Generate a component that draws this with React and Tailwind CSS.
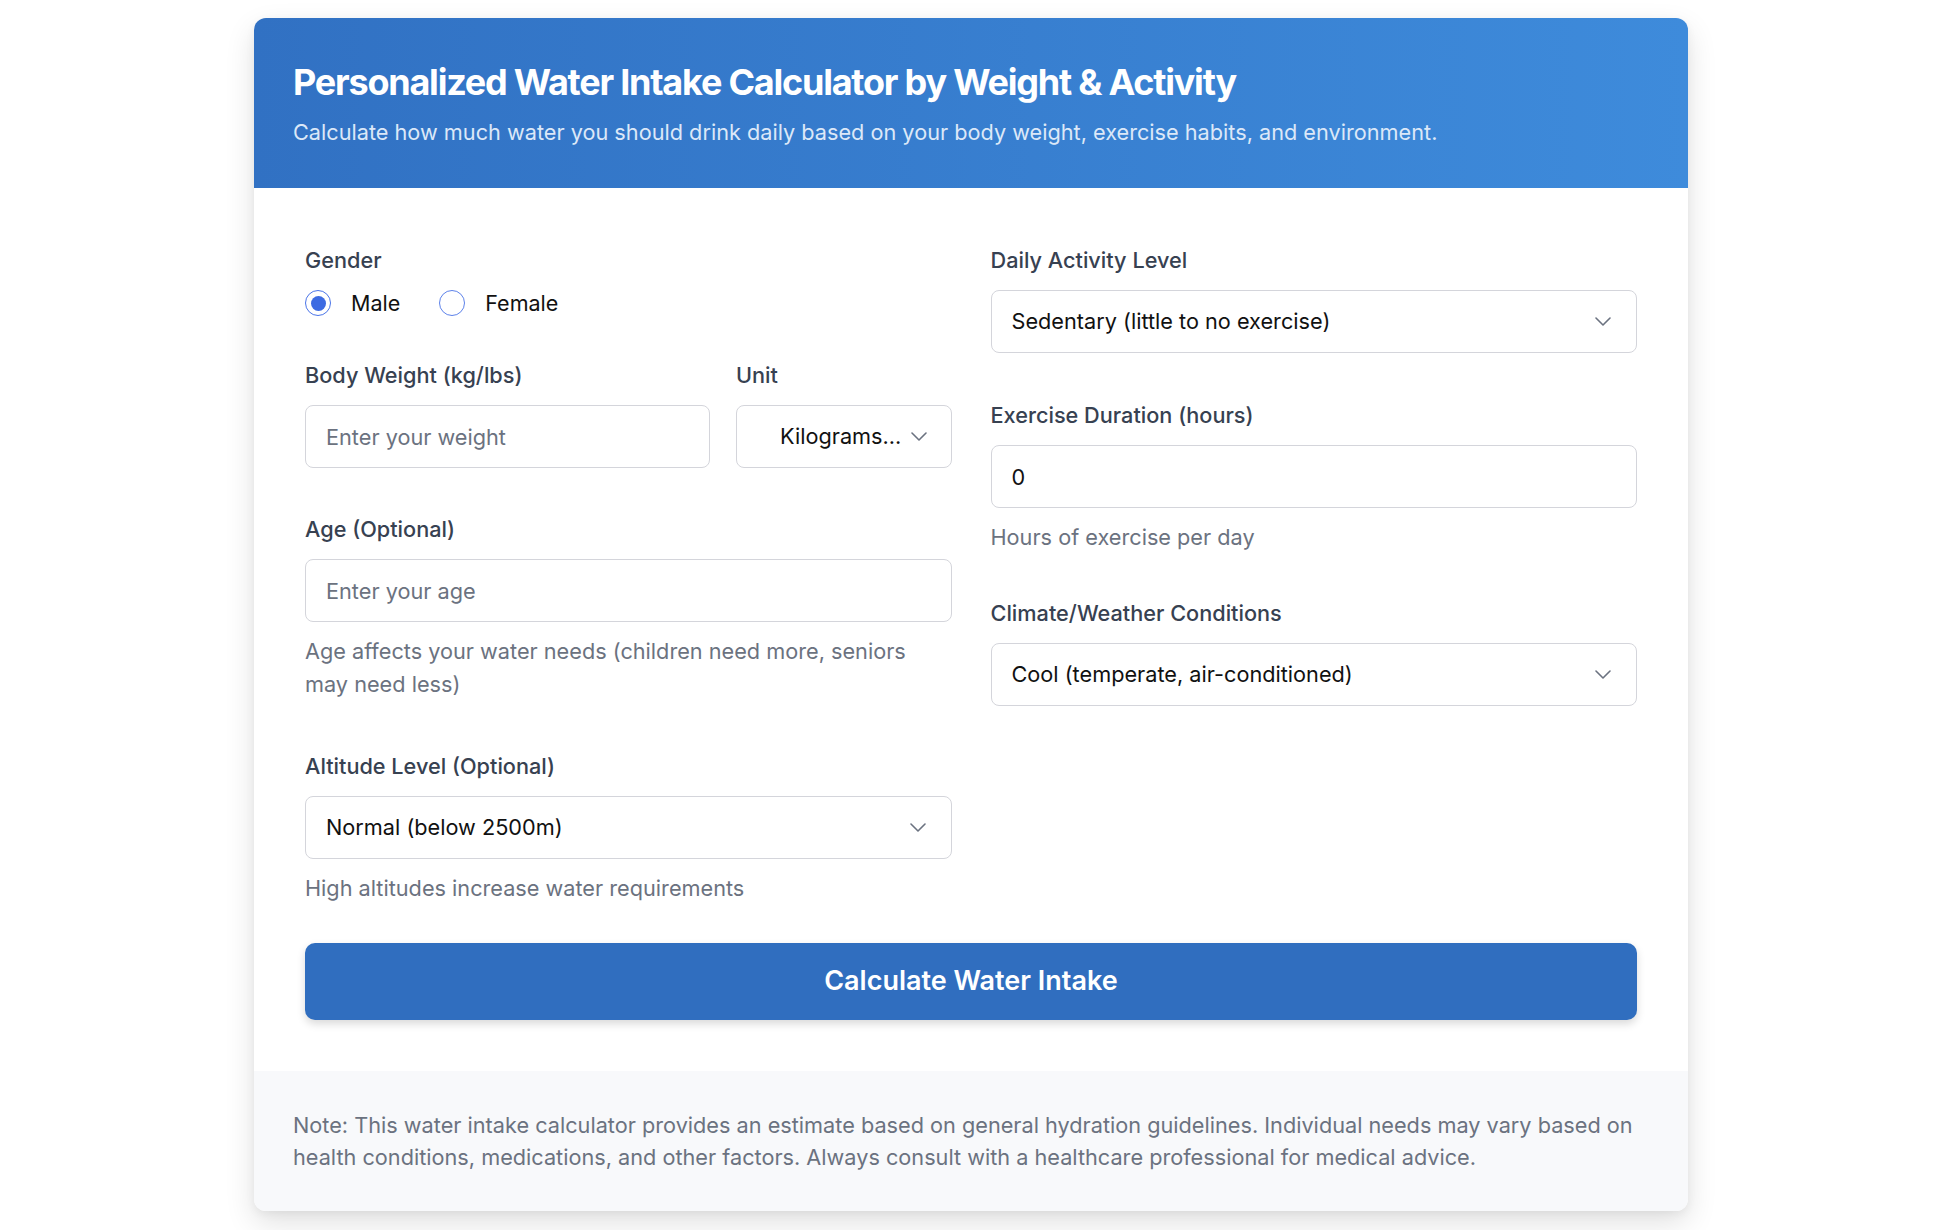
import React from "react";

function Chevron() {
  return (
    <svg width="16" height="9" viewBox="0 0 16 9" fill="none" className="shrink-0">
      <polyline points="1,1 8,8 15,1" stroke="#6b7280" strokeWidth="1.6" strokeLinecap="round" strokeLinejoin="round" />
    </svg>
  );
}

function Label({ children }) {
  return (
    <div className="text-[21.7px] leading-[30px] font-medium text-[#374151]">{children}</div>
  );
}

function SelectBox({ text }) {
  return (
    <div className="mt-[15px] h-[63px] rounded-lg border border-[#d4d5db] bg-white flex items-center justify-between pl-[20px] pr-[25px]">
      <span className="text-[21.7px] text-[#111111]">{text}</span>
      <Chevron />
    </div>
  );
}

function Help({ children }) {
  return (
    <p className="mt-[13px] text-[21.7px] leading-[32.5px] text-[#6b7280]">{children}</p>
  );
}

function Radio({ checked, label }) {
  return (
    <div className="flex items-center gap-[20px]">
      <span
        className={
          "w-[26px] h-[26px] rounded-full border-[1.5px] flex items-center justify-center " +
          (checked ? "border-[#4a74e8]" : "border-[#5d82ea]")
        }
      >
        {checked && <span className="w-[15px] h-[15px] rounded-full bg-[#3d6be2]" />}
      </span>
      <span className="text-[21.5px] leading-[30px] text-[#111111]">{label}</span>
    </div>
  );
}

export default function App() {
  return (
    <div className="min-h-screen bg-white pt-[18px] pb-[19px] font-['Inter','Noto_Sans',sans-serif]">
      <div className="ml-[254px] w-[1434px] rounded-xl bg-white shadow-[0_12px_30px_rgba(0,0,0,0.12),0_3px_10px_rgba(0,0,0,0.05)] overflow-hidden">
        {/* Header */}
        <div className="bg-linear-to-r from-[#3171c3] to-[#3e8bdb] px-[39px] pt-[42px] pb-[38px]">
          <h1 className="text-[36px] leading-[45px] font-bold text-white tracking-[-0.034em]">
            Personalized Water Intake Calculator by Weight &amp; Activity
          </h1>
          <p className="mt-[10px] text-[21.7px] leading-[35px] text-[#dce8f8]">
            Calculate how much water you should drink daily based on your body weight, exercise habits, and environment.
          </p>
        </div>

        {/* Body */}
        <div className="px-[51px] pt-[57px] pb-[51px]">
          <div className="grid grid-cols-2 gap-x-[39px]">
            {/* Left column */}
            <div className="flex flex-col">
              <div>
                <Label>Gender</Label>
                <div className="mt-[15px] h-[26px] flex items-center gap-[39px]">
                  <Radio checked label="Male" />
                  <Radio label="Female" />
                </div>
              </div>

              <div className="mt-[44px]">
                <div className="flex gap-[26px]">
                  <div className="w-[405px]">
                    <Label>Body Weight (kg/lbs)</Label>
                  </div>
                  <div className="flex-1">
                    <Label>Unit</Label>
                  </div>
                </div>
                <div className="mt-[15px] flex gap-[26px]">
                  <input
                    type="text"
                    placeholder="Enter your weight"
                    className="w-[405px] h-[63px] rounded-lg border border-[#d4d5db] bg-white px-[20px] text-[21.7px] text-[#111111] placeholder:text-[#6b7280] outline-none"
                  />
                  <div className="flex-1 h-[63px] rounded-lg border border-[#d4d5db] bg-white flex items-center pl-[43px] pr-[24px] justify-between">
                    <span className="text-[21.7px] text-[#111111]">Kilograms...</span>
                    <Chevron />
                  </div>
                </div>
              </div>

              <div className="mt-[46px]">
                <Label>Age (Optional)</Label>
                <input
                  type="text"
                  placeholder="Enter your age"
                  className="mt-[15px] w-full h-[63px] rounded-lg border border-[#d4d5db] bg-white px-[20px] text-[21.7px] text-[#111111] placeholder:text-[#6b7280] outline-none"
                />
                <Help>
                  Age affects your water needs (children need more, seniors
                  <br />
                  may need less)
                </Help>
              </div>

              <div className="mt-[51px]">
                <Label>Altitude Level (Optional)</Label>
                <SelectBox text="Normal (below 2500m)" />
                <Help>High altitudes increase water requirements</Help>
              </div>
            </div>

            {/* Right column */}
            <div className="flex flex-col">
              <div>
                <Label>Daily Activity Level</Label>
                <SelectBox text="Sedentary (little to no exercise)" />
              </div>

              <div className="mt-[47px]">
                <Label>Exercise Duration (hours)</Label>
                <input
                  type="text"
                  defaultValue="0"
                  className="mt-[15px] w-full h-[63px] rounded-lg border border-[#d4d5db] bg-white px-[20px] text-[21.7px] text-[#111111] outline-none"
                />
                <Help>Hours of exercise per day</Help>
              </div>

              <div className="mt-[44px]">
                <Label>Climate/Weather Conditions</Label>
                <SelectBox text="Cool (temperate, air-conditioned)" />
              </div>
            </div>
          </div>

          <button className="mt-[38px] w-full h-[77px] rounded-[10px] bg-[#306ebf] text-white text-[27px] font-semibold shadow-[0_4px_8px_rgba(0,0,0,0.15)]">
            Calculate Water Intake
          </button>
        </div>

        {/* Footer */}
        <div className="bg-[#f8f9fb] px-[39px] py-[38px]">
          <p className="text-[21.7px] leading-[32px] text-[#6b7280]">
            Note: This water intake calculator provides an estimate based on general hydration guidelines. Individual needs may vary based on
            <br />
            health conditions, medications, and other factors. Always consult with a healthcare professional for medical advice.
          </p>
        </div>
      </div>
    </div>
  );
}
